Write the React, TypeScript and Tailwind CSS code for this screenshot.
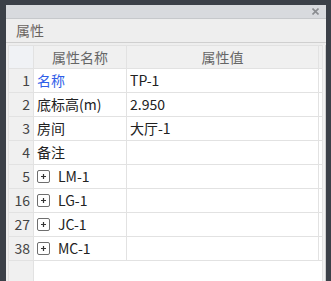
import React from "react";

const rows: { n: string; name: string; value: string; blue?: boolean; plus?: boolean }[] = [
  { n: "1", name: "名称", value: "TP-1", blue: true },
  { n: "2", name: "底标高(m)", value: "2.950" },
  { n: "3", name: "房间", value: "大厅-1" },
  { n: "4", name: "备注", value: "" },
  { n: "5", name: "LM-1", value: "", plus: true },
  { n: "16", name: "LG-1", value: "", plus: true },
  { n: "27", name: "JC-1", value: "", plus: true },
  { n: "38", name: "MC-1", value: "", plus: true },
];

function PlusBox() {
  return (
    <span className="inline-flex items-center justify-center w-[13px] h-[13px] border border-[#6e6e6e] rounded-[2px] mr-[8px] shrink-0">
      <svg width="9" height="9" viewBox="0 0 9 9">
        <path d="M4.5 2V7M2 4.5H7" stroke="#333" strokeWidth="1.2" />
      </svg>
    </span>
  );
}

export default function App() {
  const font = { fontFamily: '"Noto Sans CJK SC", "Noto Sans", sans-serif' };
  return (
    <div className="w-[331px] h-[281px] bg-[#3b4048] pt-[5px] pl-[6px] pr-[5px] flex flex-col overflow-hidden" style={font}>
      <div className="flex-1 flex flex-col bg-[#eeeeee] min-h-0">
        <div className="h-[14px] bg-[#d8dade] border-b border-[#c6c8cb] flex items-center justify-end pr-[7px]">
          <svg width="7" height="7" viewBox="0 0 7 7">
            <path d="M0.5 0.5L6.5 6.5M6.5 0.5L0.5 6.5" stroke="#8a8c90" strokeWidth="1.6" />
          </svg>
        </div>
        <div className="h-[24px] flex items-center pl-[10px] text-[14px] text-[#6a6460] border-b border-[#cfcfcf]">
          属性
        </div>
        <div className="flex-1 flex pl-[2px] pt-[2px] min-h-0">
          <div className="flex-1 flex flex-col bg-white border-l border-t border-[#e2e2e2] min-h-0">
            <div className="flex h-[23px] bg-[#f0f0f0] border-b border-[#e2e2e2] text-[14px] text-[#666]">
              <div className="w-[25px] border-r border-[#e2e2e2] bg-[#f0f2f5]" />
              <div className="w-[93px] border-r border-[#e2e2e2] flex items-center justify-center">属性名称</div>
              <div className="w-[192px] border-r border-[#e2e2e2] flex items-center justify-center">属性值</div>
            </div>
            {rows.map((r) => (
              <div key={r.n} className="flex h-[24px] border-b border-[#e2e2e2] text-[14px] text-[#222]">
                <div className="w-[25px] bg-[#f0f0f0] border-r border-[#e2e2e2] flex items-center justify-end pr-[3px] text-[#444]">
                  {r.n}
                </div>
                <div className={`w-[93px] border-r border-[#e2e2e2] flex items-center pl-[3px] ${r.blue ? "text-[#2f5ee8]" : ""}`}>
                  {r.plus && <PlusBox />}
                  {r.name}
                </div>
                <div className="w-[192px] border-r border-[#e2e2e2] flex items-center pl-[3px]">{r.value}</div>
              </div>
            ))}
            <div className="flex-1 flex">
              <div className="w-[25px] bg-[#f0f0f0] border-r border-[#e2e2e2]" />
              <div className="flex-1" />
            </div>
          </div>
          <div className="w-[4px] flex">
            <div className="w-[1px] bg-[#e4e4e4]" />
            <div className="w-[2px] bg-[#f2f2f2]" />
            <div className="w-[1px] bg-[#cfcfcf]" />
          </div>
        </div>
      </div>
    </div>
  );
}
